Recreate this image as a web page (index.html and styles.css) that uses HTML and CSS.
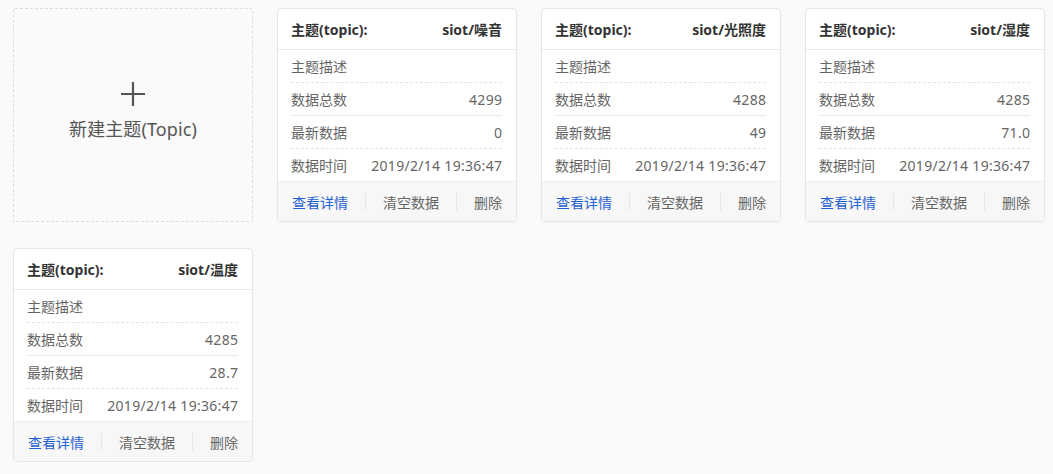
FILE: index.html
```html
<!DOCTYPE html>
<html lang="zh-CN">
<head>
<meta charset="utf-8">
<title>Topics</title>
<link rel="stylesheet" href="styles.css">
</head>
<body>
<div class="grid">
  <div class="new-topic">
    <svg class="plus" width="24" height="24" viewBox="0 0 24 24"><path d="M12 0V24M0 12H24" stroke="#555" stroke-width="2.2" fill="none"/></svg>
    <div class="new-text">新建主题(Topic)</div>
  </div>

  <div class="card">
    <div class="card-head"><span>主题(topic):</span><span>siot/噪音</span></div>
    <div class="card-body">
      <div class="row dashed"><span>主题描述</span><span class="val"></span></div>
      <div class="row solid"><span>数据总数</span><span class="val">4299</span></div>
      <div class="row dashed"><span>最新数据</span><span class="val">0</span></div>
      <div class="row"><span>数据时间</span><span class="val">2019/2/14 19:36:47</span></div>
    </div>
    <div class="card-foot"><a class="link">查看详情</a><i class="sep"></i><a>清空数据</a><i class="sep"></i><a>删除</a></div>
  </div>

  <div class="card">
    <div class="card-head"><span>主题(topic):</span><span>siot/光照度</span></div>
    <div class="card-body">
      <div class="row dashed"><span>主题描述</span><span class="val"></span></div>
      <div class="row solid"><span>数据总数</span><span class="val">4288</span></div>
      <div class="row dashed"><span>最新数据</span><span class="val">49</span></div>
      <div class="row"><span>数据时间</span><span class="val">2019/2/14 19:36:47</span></div>
    </div>
    <div class="card-foot"><a class="link">查看详情</a><i class="sep"></i><a>清空数据</a><i class="sep"></i><a>删除</a></div>
  </div>

  <div class="card">
    <div class="card-head"><span>主题(topic):</span><span>siot/湿度</span></div>
    <div class="card-body">
      <div class="row dashed"><span>主题描述</span><span class="val"></span></div>
      <div class="row solid"><span>数据总数</span><span class="val">4285</span></div>
      <div class="row dashed"><span>最新数据</span><span class="val">71.0</span></div>
      <div class="row"><span>数据时间</span><span class="val">2019/2/14 19:36:47</span></div>
    </div>
    <div class="card-foot"><a class="link">查看详情</a><i class="sep"></i><a>清空数据</a><i class="sep"></i><a>删除</a></div>
  </div>

  <div class="card">
    <div class="card-head"><span>主题(topic):</span><span>siot/温度</span></div>
    <div class="card-body">
      <div class="row dashed"><span>主题描述</span><span class="val"></span></div>
      <div class="row solid"><span>数据总数</span><span class="val">4285</span></div>
      <div class="row dashed"><span>最新数据</span><span class="val">28.7</span></div>
      <div class="row"><span>数据时间</span><span class="val">2019/2/14 19:36:47</span></div>
    </div>
    <div class="card-foot"><a class="link">查看详情</a><i class="sep"></i><a>清空数据</a><i class="sep"></i><a>删除</a></div>
  </div>
</div>
</body>
</html>
```
FILE: styles.css
```css
* { box-sizing: border-box; }
html, body { margin: 0; padding: 0; }
body {
  background: #fafafa;
  font-family: "Noto Sans", "Noto Sans CJK SC", sans-serif;
  font-size: 14px;
  color: #666;
}
.grid {
  display: grid;
  grid-template-columns: repeat(4, 240px);
  column-gap: 24px;
  row-gap: 26px;
  padding: 8px 0 0 13px;
}
.new-topic {
  height: 214px;
  border: 1px dashed #dcdcdc;
  border-radius: 2px;
  background: #fafafa;
  display: flex;
  flex-direction: column;
  align-items: center;
  justify-content: center;
  gap: 11px;
  padding-bottom: 8px;
}
.plus { display: block; }
.new-text {
  font-size: 18px;
  line-height: 24px;
  color: #555;
  letter-spacing: 0.1px;
}
.card {
  height: 214px;
  background: #fff;
  border: 1px solid #e6e6e6;
  border-radius: 4px;
  box-shadow: 0 1px 2px rgba(0,0,0,0.04);
  overflow: hidden;
  display: flex;
  flex-direction: column;
}
.card-head {
  height: 41px;
  border-bottom: 1px solid #e8e8e8;
  display: flex;
  justify-content: space-between;
  align-items: center;
  padding: 0 14px 0 13px;
  font-weight: 700;
  color: #333;
}
.card-body {
  padding: 0 14px 0 13px;
}
.row {
  height: 33px;
  display: flex;
  justify-content: space-between;
  align-items: center;
}
.val { letter-spacing: 0.3px; margin-right: -0.3px; }
.row.dashed { border-bottom: 1px dashed #e3e3e3; }
.row.solid { border-bottom: 1px solid #e6e6e6; }
.row:last-child { height: 32px; }
.card-foot {
  flex: 1;
  background: #f7f7f7;
  border-top: 1px solid #eeeeee;
  display: flex;
  justify-content: space-between;
  align-items: center;
  padding: 0 14px 0 14px;
  color: #666;
}
.card-foot a { text-decoration: none; color: #666; }
.card-foot a.link { color: #1f62d2; }
.sep {
  display: block;
  width: 1px;
  height: 17px;
  background: #e4e4e4;
}
```
